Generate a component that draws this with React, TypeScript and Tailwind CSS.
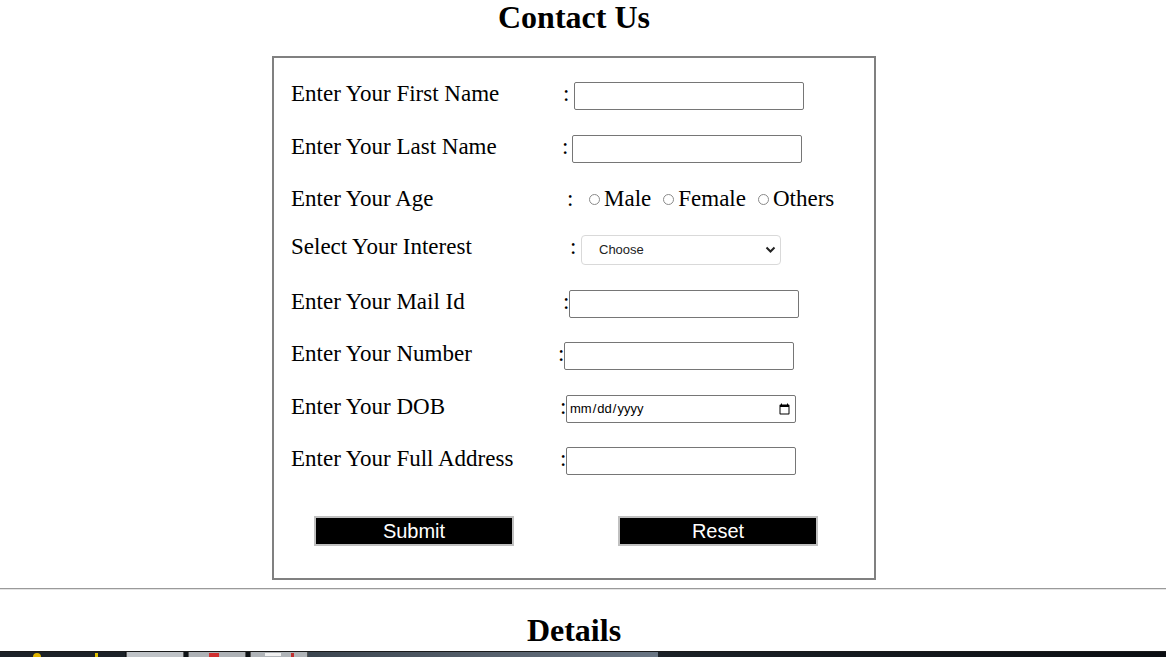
import React from 'react';

const serif = { fontFamily: '"Liberation Serif", "Times New Roman", serif' };
const sans = { fontFamily: '"Liberation Sans", Arial, sans-serif' };

type Row = {
  label: string;
  lw: number; // label column width
  ml: number; // space between colon and field
  mt: number;
  kind: 'text' | 'radio' | 'select' | 'date';
};

const rows: Row[] = [
  { label: 'Enter Your First Name', lw: 272, ml: 5, mt: 24, kind: 'text' },
  { label: 'Enter Your Last Name', lw: 271, ml: 4, mt: 25, kind: 'text' },
  { label: 'Enter Your Age', lw: 276, ml: 16, mt: 24, kind: 'radio' },
  { label: 'Select Your Interest', lw: 279, ml: 5, mt: 24, kind: 'select' },
  { label: 'Enter Your Mail Id', lw: 272, ml: 0, mt: 25, kind: 'text' },
  { label: 'Enter Your Number', lw: 267, ml: 0, mt: 24, kind: 'text' },
  { label: 'Enter Your DOB', lw: 269, ml: 0, mt: 25, kind: 'date' },
  { label: 'Enter Your Full Address', lw: 269, ml: 0, mt: 24, kind: 'text' },
];

const Radio: React.FC<{ text: string; first?: boolean }> = ({ text, first }) => (
  <label className={`flex items-center ${first ? '' : 'ml-[12px]'}`}>
    <span className="w-[11px] h-[11px] rounded-full border border-[#8a8a8a] bg-white mr-[4px] mt-[1px]" />
    <span>{text}</span>
  </label>
);

const Field: React.FC<{ row: Row }> = ({ row }) => {
  if (row.kind === 'radio') {
    return (
      <div className="flex items-center h-[24px] text-[23px] leading-[24px] text-black">
        <Radio text="Male" first />
        <Radio text="Female" />
        <Radio text="Others" />
      </div>
    );
  }
  if (row.kind === 'select') {
    return (
      <div className="relative w-[200px] h-[30px]">
        <select className="appearance-none w-full h-full border border-[#d9d9d9] rounded-[4px] bg-white pl-[17px] text-[13px] text-[#222] outline-none" style={sans}>
          <option>Choose</option>
          <option>Sports</option>
          <option>Music</option>
          <option>Reading</option>
        </select>
        <svg className="absolute right-[5px] top-[11px] pointer-events-none" width="11" height="8" viewBox="0 0 11 8">
          <path d="M1.5 1.5 L5.5 5.5 L9.5 1.5" fill="none" stroke="#222" strokeWidth="2" />
        </svg>
      </div>
    );
  }
  if (row.kind === 'date') {
    return (
      <input
        type="date"
        className="w-[230px] h-[28px] border border-[#767676] rounded-[2px] px-[2px] text-[13px] text-black bg-white"
        style={sans}
      />
    );
  }
  return <input type="text" className="w-[230px] h-[28px] border border-[#767676] rounded-[2px] bg-white px-1" />;
};

export default function App() {
  return (
    <div className="min-h-screen bg-white text-black" style={serif}>
      <div className="w-[1148px]">
        <h1 className="text-[32px] font-bold text-center leading-[34px]">Contact Us</h1>

        <form className="mx-auto mt-[22px] w-[604px] border-2 border-[#808080] pl-[17px] pb-[32px]">
          {rows.map((row) => (
            <div key={row.label} className="flex items-start" style={{ marginTop: row.mt }}>
              <div className="text-[23px] leading-[24px] shrink-0" style={{ width: row.lw }}>
                {row.label}
              </div>
              <span className="text-[23px] leading-[24px] w-[6px] shrink-0">:</span>
              <div style={{ marginLeft: row.ml }}>
                <Field row={row} />
              </div>
            </div>
          ))}

          <div className="flex mt-[41px] ml-[23px] gap-[104px]" style={sans}>
            <button type="submit" className="w-[200px] h-[30px] bg-black text-white text-[20px] leading-[24px] border-2 border-[#c0c0c0]">
              Submit
            </button>
            <button type="reset" className="w-[200px] h-[30px] bg-black text-white text-[20px] leading-[24px] border-2 border-[#c0c0c0]">
              Reset
            </button>
          </div>
        </form>
      </div>

      <div className="mt-[8px] border-t border-[#9a9a9a] border-b border-b-[#e4e4e4]" />

      <div className="w-[1148px]">
        <h2 className="text-[32px] font-bold text-center leading-[34px] mt-[23px]">Details</h2>
      </div>

      {/* taskbar strip */}
      <div className="fixed bottom-0 left-0 right-0 h-[6px] flex border-t border-[#1a1a1a] bg-[#0e1216]">
        <div className="w-[125px] bg-[#1c2228] relative">
          <span className="absolute left-[33px] top-[1px] w-[8px] h-[4px] rounded-t-full bg-[#e0b400]" />
          <span className="absolute left-[95px] top-[1px] w-[3px] h-[4px] bg-[#e0c000]" />
        </div>
        <div className="w-[58px] ml-[1px] bg-[#bfc3c7] border-x border-[#555]" />
        <div className="w-[58px] ml-[4px] bg-[#aeb2b6] border-x border-[#555] relative">
          <span className="absolute left-[20px] top-[1px] w-[10px] h-[4px] bg-[#d03030]" />
        </div>
        <div className="w-[58px] ml-[4px] bg-[#b0b4b8] border-x border-[#555] relative">
          <span className="absolute left-[14px] top-[1px] w-[16px] h-[3px] bg-[#f0f0f0]" />
          <span className="absolute left-[40px] top-[1px] w-[3px] h-[4px] bg-[#c03030]" />
        </div>
        <div className="w-[350px] bg-gradient-to-r from-[#3c4650] via-[#56606c] to-[#6a7684]" />
        <div className="flex-1 bg-gradient-to-r from-[#1c2228] to-[#0b0e12]" />
      </div>
    </div>
  );
}
